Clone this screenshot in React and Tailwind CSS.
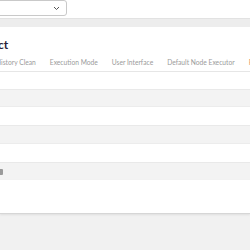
export default function App() {
  const font = { fontFamily: '"Lato", "Open Sans", sans-serif' };
  return (
    <div className="w-[250px] h-[250px] overflow-hidden bg-[#f1f1f1]" style={font}>
      <div className="h-[18px] bg-white flex items-start">
        <div className="ml-[-20px] w-[87px] h-[16px] border border-[#c9c9c9] rounded-[3px] bg-white flex items-center justify-end pr-[6px]">
          <svg width="7" height="5" viewBox="0 0 7 5"><path d="M1 1 L3.5 3.5 L6 1" fill="none" stroke="#555" strokeWidth="1" /></svg>
        </div>
      </div>
      <div className="h-[9px] bg-[#ededed] border-t border-[#e2e2e2]" />
      <div className="bg-white h-[62px] flex flex-col">
        <div className="h-[28px] flex items-end pb-[4px]">
          <span className="ml-[-30px] text-[12px] font-bold text-[#28223a] leading-none">Project</span>
        </div>
        <div className="h-[17px] flex items-end border-b border-[#e6e6e6]">
          <div className="flex ml-[-4px] gap-[14px] text-[6.7px] text-[#9b9b9b] leading-none pb-[5px] whitespace-nowrap">
            <span>History Clean</span>
            <span>Execution Mode</span>
            <span>User Interface</span>
            <span>Default Node Executor</span>
            <span className="text-[#e8955a]">Project</span>
          </div>
        </div>
      </div>
      <div className="h-[17px] bg-[#f3f3f3] border-t border-[#e9e9e9]" />
      <div className="h-[19px] bg-white border-t border-[#ececec]" />
      <div className="h-[18px] bg-[#f3f3f3] border-t border-[#e9e9e9]" />
      <div className="h-[19px] bg-white border-t border-[#ececec]" />
      <div className="h-[18px] bg-[#f3f3f3] border-t border-[#e9e9e9] flex items-center">
        <div className="ml-[-3px] w-[6px] h-[6px] bg-[#9a9a9a] rounded-[1px]" />
      </div>
      <div className="h-[34px] bg-white border-b border-[#d6d6d6] shadow-[0_1px_2px_rgba(0,0,0,0.08)]" />
    </div>
  );
}
